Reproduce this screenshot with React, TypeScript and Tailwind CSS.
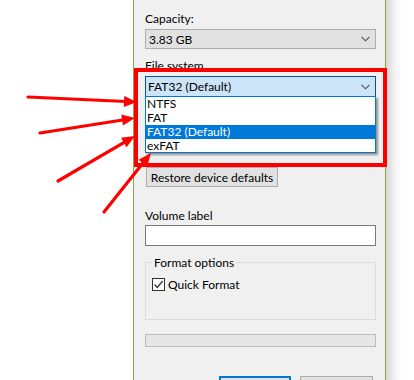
import React from "react";

const Chevron = () => (
  <svg width="9" height="6" viewBox="0 0 9 6" className="shrink-0">
    <path d="M0.5 0.8 L4.5 4.8 L8.5 0.8" fill="none" stroke="#505050" strokeWidth="1.1" />
  </svg>
);

type Arrow = { x1: number; y1: number; x2: number; y2: number };
const arrows: Arrow[] = [
  { x1: 28, y1: 97, x2: 137, y2: 102 },
  { x1: 40, y1: 133, x2: 135, y2: 118 },
  { x1: 58, y1: 181, x2: 135, y2: 136 },
  { x1: 104, y1: 212, x2: 151, y2: 153 },
];

function head(a: Arrow) {
  const dx = a.x2 - a.x1;
  const dy = a.y2 - a.y1;
  const len = Math.sqrt(dx * dx + dy * dy);
  const ux = dx / len;
  const uy = dy / len;
  const hl = 13;
  const hw = 5.5;
  const bx = a.x2 - ux * hl;
  const by = a.y2 - uy * hl;
  const p1 = `${a.x2},${a.y2}`;
  const p2 = `${bx - uy * hw},${by + ux * hw}`;
  const p3 = `${bx + uy * hw},${by - ux * hw}`;
  return { pts: `${p1} ${p2} ${p3}`, ex: bx + ux * 2, ey: by + uy * 2 };
}

export default function App() {
  return (
    <div
      className="relative w-[414px] h-[380px] overflow-hidden bg-white flex text-[12px] text-black"
      style={{ fontFamily: 'Lato, "Noto Sans", sans-serif' }}
    >
      <div className="w-[133px] shrink-0" />
      <div className="w-[253px] shrink-0 h-full bg-[#f0f0f0] border-l border-r border-[#84a94c] pl-[11px] pr-[9px] pt-[11px] flex flex-col">
        <div className="shrink-0 h-[15px] leading-[15px]">Capacity:</div>
        <div className="shrink-0 mt-[3px] h-[20px] bg-[#e1e1e1] border border-[#adadad] flex items-center pl-[3px] pr-[5px] justify-between">
          <span className="leading-[15px]">3.83 GB</span>
          <Chevron />
        </div>
        <div className="shrink-0 mt-[9px] h-[15px] leading-[15px]">File system</div>
        <div className="shrink-0 relative mt-[3px]">
          <div className="h-[21px] bg-[#cce4f7] border border-[#005499] flex items-center pl-[2px] pr-[5px] justify-between">
            <span className="leading-[15px]">FAT32 (Default)</span>
            <Chevron />
          </div>
          <div className="absolute left-0 top-[20px] w-full bg-white border border-[#0078d7] shadow-[2px_2px_2px_rgba(0,0,0,0.4)] flex flex-col z-10">
            <div className="h-[14px] leading-[14px] pl-[1px]">NTFS</div>
            <div className="h-[14px] leading-[14px] pl-[1px]">FAT</div>
            <div className="h-[14px] leading-[14px] pl-[1px] bg-[#0078d7] text-white">FAT32 (Default)</div>
            <div className="h-[13px] leading-[13px] pl-[1px]">exFAT</div>
          </div>
        </div>
        <div className="shrink-0 mt-[70px] ml-[1px] w-[132px] h-[20px] bg-[#e1e1e1] border border-[#adadad] flex items-center justify-center leading-[15px] whitespace-nowrap">
          Restore device defaults
        </div>
        <div className="shrink-0 mt-[21px] h-[15px] leading-[15px]">Volume label</div>
        <div className="shrink-0 mt-[2px] h-[21px] bg-white border border-[#7a7a7a]" />
        <fieldset className="shrink-0 mt-[9px] h-[65px] border border-[#dcdcdc] pl-[6px] pr-0 pb-0 pt-[7px]">
          <legend className="px-[2px] leading-[15px] h-[15px]">Format options</legend>
          <div className="flex items-center">
            <div className="w-[13px] h-[13px] border border-[#333333] bg-white flex items-center justify-center">
              <svg width="11" height="11" viewBox="0 0 11 11">
                <path d="M1.5 5.5 L4.3 8.4 L9.6 2" fill="none" stroke="#3c3c3c" strokeWidth="1.4" />
              </svg>
            </div>
            <span className="ml-[3px] leading-[15px]">Quick Format</span>
          </div>
        </fieldset>
        <div className="shrink-0 mt-[14px] h-[13px] bg-[#e6e6e6] border border-[#bcbcbc]" />
        <div className="shrink-0 mt-[29px] flex gap-[9px] pl-[74px]">
          <div className="w-[72px] h-[22px] bg-[#e1e1e1] border-2 border-[#0078d7]" />
          <div className="w-[73px] h-[22px] bg-[#e1e1e1] border border-[#adadad]" />
        </div>
      </div>
      <div className="w-[16px] shrink-0 h-full bg-gradient-to-r from-[#d6d6d6] via-[#f0f0f0] to-white" />
      <div className="flex-1" />

      <div className="absolute left-[134px] top-[68px] w-[253px] h-[99px] border-4 border-[#ff0000] z-20 pointer-events-none" />
      <svg className="absolute left-0 top-0 z-30 pointer-events-none" width="414" height="380">
        {arrows.map((a, i) => {
          const h = head(a);
          return (
            <g key={i}>
              <line x1={a.x1} y1={a.y1} x2={h.ex} y2={h.ey} stroke="#ff0000" strokeWidth="3.2" strokeLinecap="round" />
              <polygon points={h.pts} fill="#ff0000" />
            </g>
          );
        })}
      </svg>
    </div>
  );
}
